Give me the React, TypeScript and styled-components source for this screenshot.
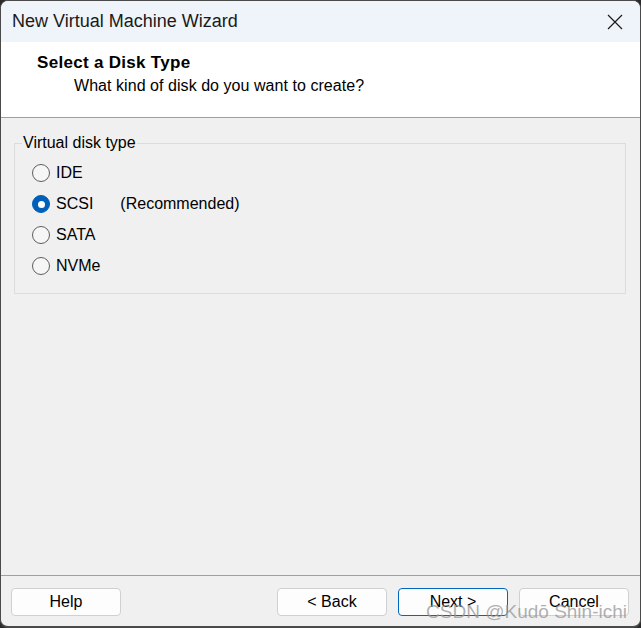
import React, { useState } from "react";
import styled, { createGlobalStyle } from "styled-components";

const Global = createGlobalStyle`
  html, body { margin: 0; padding: 0; background: #2a2a2a; }
  body { font-family: "Liberation Sans", Arial, sans-serif; }
  * { box-sizing: border-box; }
`;

const Window = styled.div`
  position: relative;
  width: 641px;
  height: 628px;
  background: #f0f0f0;
  border: 1px solid #4a4a4a;
  border-bottom-width: 2px;
  border-radius: 8px;
  overflow: hidden;
  display: flex;
  flex-direction: column;
  color: #000;
`;

const TitleBar = styled.div`
  height: 41px;
  flex: none;
  background: #eef4f9;
  display: flex;
  align-items: center;
  justify-content: space-between;
  padding: 0 11px 0 11px;
`;

const Title = styled.span`
  font-size: 18px;
  color: #1a1a1a;
`;

const CloseBtn = styled.div`
  width: 22px;
  height: 22px;
  display: flex;
  align-items: center;
  justify-content: center;
  margin-right: 3px;
`;

const Header = styled.div`
  height: 76px;
  flex: none;
  background: #fff;
  border-bottom: 1px solid #a0a0a0;
  padding: 11px 0 0 36px;
`;

const HeaderTitle = styled.div`
  font-size: 17px;
  font-weight: bold;
  letter-spacing: 0.3px;
  line-height: 20px;
`;

const HeaderSub = styled.div`
  font-size: 16px;
  line-height: 22px;
  margin-left: 37px;
  margin-top: 2px;
  letter-spacing: 0.05px;
`;

const Body = styled.div`
  flex: 1;
  padding: 16px 14px 0 13px;
`;

const Group = styled.fieldset`
  margin: 0;
  border: 1px solid #dcdcdc;
  padding: 0 0 15px 17px;
  height: 160px;
`;

const Legend = styled.legend`
  font-size: 16px;
  padding: 0 1px;
  margin-left: -10px;
  line-height: 18px;
`;

const Options = styled.div`
  display: flex;
  flex-direction: column;
  gap: 11px;
  margin-top: 11px;
`;

const Option = styled.label`
  display: flex;
  align-items: center;
  height: 20px;
  font-size: 16px;
  cursor: default;
`;

const Radio = styled.span<{ $checked: boolean }>`
  width: 18px;
  height: 18px;
  border-radius: 50%;
  flex: none;
  display: flex;
  align-items: center;
  justify-content: center;
  margin-right: 6px;
  background: ${(p) => (p.$checked ? "#005fb8" : "#f6f6f6")};
  border: 1px solid ${(p) => (p.$checked ? "#005fb8" : "#5f5f5f")};
  &::after {
    content: "";
    display: ${(p) => (p.$checked ? "block" : "none")};
    width: 7px;
    height: 7px;
    border-radius: 50%;
    background: #fff;
  }
`;

const OptionNote = styled.span`
  margin-left: 27px;
`;

const Footer = styled.div`
  flex: none;
  height: 51px;
  border-top: 1px solid #a0a0a0;
  display: flex;
  align-items: flex-start;
  padding: 12px 11px 0 10px;
  gap: 11px;
`;

const Spacer = styled.div`
  flex: 1;
`;

const Button = styled.button<{ $primary?: boolean }>`
  width: 110px;
  height: 28px;
  background: #fdfdfd;
  border: 1px solid ${(p) => (p.$primary ? "#0067c0" : "#d0d0d0")};
  border-radius: 4px;
  font-family: "Liberation Sans", Arial, sans-serif;
  font-size: 16px;
  color: #000;
  padding: 0;
`;

const Watermark = styled.div`
  position: absolute;
  right: 13px;
  bottom: 3px;
  font-size: 19px;
  color: rgba(150, 150, 150, 0.75);
  pointer-events: none;
  font-family: "Liberation Sans", Arial, sans-serif;
`;

const options = [
  { id: "IDE", label: "IDE" },
  { id: "SCSI", label: "SCSI", note: "(Recommended)" },
  { id: "SATA", label: "SATA" },
  { id: "NVMe", label: "NVMe" },
];

export default function App() {
  const [sel, setSel] = useState("SCSI");
  return (
    <>
      <Global />
      <Window>
        <TitleBar>
          <Title>New Virtual Machine Wizard</Title>
          <CloseBtn>
            <svg width="16" height="16" viewBox="0 0 16 16">
              <path d="M1 1 L15 15 M15 1 L1 15" stroke="#1a1a1a" strokeWidth="1.2" fill="none" />
            </svg>
          </CloseBtn>
        </TitleBar>
        <Header>
          <HeaderTitle>Select a Disk Type</HeaderTitle>
          <HeaderSub>What kind of disk do you want to create?</HeaderSub>
        </Header>
        <Body>
          <Group>
            <Legend>Virtual disk type</Legend>
            <Options>
              {options.map((o) => (
                <Option key={o.id} onClick={() => setSel(o.id)}>
                  <Radio $checked={sel === o.id} />
                  {o.label}
                  {o.note && <OptionNote>{o.note}</OptionNote>}
                </Option>
              ))}
            </Options>
          </Group>
        </Body>
        <Footer>
          <Button>Help</Button>
          <Spacer />
          <Button>&lt; Back</Button>
          <Button $primary>Next &gt;</Button>
          <Button>Cancel</Button>
        </Footer>
        <Watermark>CSDN @Kudō Shin-ichi</Watermark>
      </Window>
    </>
  );
}
